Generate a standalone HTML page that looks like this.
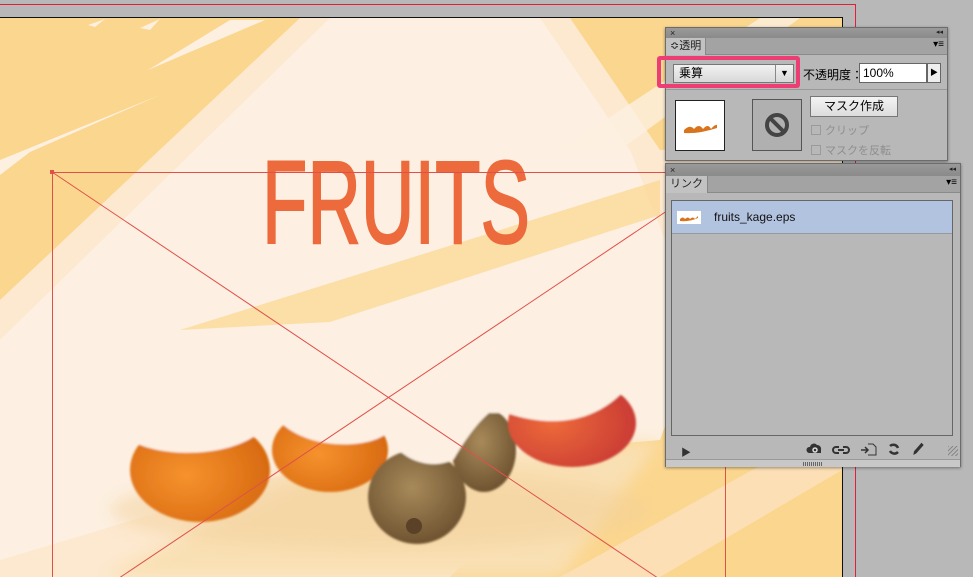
<!DOCTYPE html>
<html><head><meta charset="utf-8"><style>
*{margin:0;padding:0;box-sizing:border-box}
body{width:973px;height:577px;overflow:hidden;background:#b8b8b8;font-family:"Liberation Sans","Noto Sans CJK JP",sans-serif;position:relative}
.abs{position:absolute}
.panel{position:absolute;background:#b8b8b8;border:1px solid #6c6c6c;box-shadow:0 1px 3px rgba(0,0,0,.4)}
.bar{background:linear-gradient(#9a9a9a,#8a8a8a);position:relative;font-size:9px;color:#222}
.tabrow{height:17px;background:#a3a3a3;position:relative;border-bottom:1px solid #8a8a8a}
.tab{position:absolute;left:0;top:0;height:17px;background:#c2c2c2;border-right:1px solid #888;font-size:11px;line-height:17px;padding:0 4px;color:#222}
.gray{color:#8e8e8e;font-size:11px}
.cb{display:inline-block;width:10px;height:10px;border:1px solid #9a9a9a;vertical-align:-1px;margin-right:4px}
</style></head><body>
<svg class="abs" style="left:0;top:0" width="973" height="577">
<defs>
<radialGradient id="or" cx="0.4" cy="0.55" r="0.6"><stop offset="0" stop-color="#f6922e"/><stop offset="1" stop-color="#d86a10"/></radialGradient>
<radialGradient id="kw" cx="0.45" cy="0.4" r="0.6"><stop offset="0" stop-color="#a88a5a"/><stop offset="1" stop-color="#6f5431"/></radialGradient>
<radialGradient id="ap" cx="0.35" cy="0.5" r="0.7"><stop offset="0" stop-color="#ec6a3a"/><stop offset="1" stop-color="#c83834"/></radialGradient>
<filter id="bl"><feGaussianBlur stdDeviation="8"/></filter>
<filter id="bl2"><feGaussianBlur stdDeviation="1"/></filter>
</defs>
<rect x="0" y="18" width="842" height="559" fill="#fbd68e"/>
<polygon points="300,18 570,18 660,150 842,140 842,330 600,420 450,577 0,577 0,300" fill="#fde9d0"/>
<polygon points="330,18 540,18 630,150 700,330 660,440 300,470 0,560 0,340" fill="#fdf0e2"/>
<polygon points="180,330 660,180 660,215 330,322" fill="#fbd68e" opacity="0.7"/>
<polygon points="490,577 842,360 842,577" fill="#fbd68e"/>
<polygon points="560,577 842,420 842,470 660,577" fill="#fcdfb5"/>
<polygon points="0,160 160,95 30,152 0,175" fill="#fdf0e0"/>
<polygon points="148,70 265,20 230,20" fill="#fdf0e0"/>
<polygon points="88,25 105,19 95,27" fill="#fdf0e0"/>
<polygon points="140,28 160,19 150,30" fill="#fdf0e0"/>
<polygon points="560,150 760,18 800,18 620,150" fill="#fdf0e0" opacity="0.8"/>
<polygon points="100,577 300,480 660,440 560,577" fill="#f9e0b4" filter="url(#bl)"/>
<ellipse cx="380" cy="510" rx="270" ry="40" fill="#f3d09a" opacity="0.5" filter="url(#bl)"/>
<g filter="url(#bl2)">
<ellipse cx="200" cy="470" rx="70" ry="52" fill="url(#or)"/>
<ellipse cx="330" cy="450" rx="58" ry="42" fill="url(#or)"/>
<ellipse cx="484" cy="450" rx="32" ry="42" fill="url(#kw)"/>
<ellipse cx="417" cy="497" rx="49" ry="47" fill="url(#kw)"/>
<ellipse cx="572" cy="423" rx="64" ry="44" fill="url(#ap)"/>
<path d="M100,340 L700,340 L640,340 L632,381 C600,425 550,428 507,413 L489,413 C475,425 462,445 454,459 C440,468 405,468 386,434 C365,450 300,450 275,416 L268,424 C240,460 160,458 132,441 L100,340Z" fill="#fdf0e2"/>
</g>
<circle cx="414" cy="526" r="8" fill="#5a4128"/>
<text x="262" y="243" font-family="Liberation Sans Narrow, Liberation Sans" font-size="118" fill="#ec6a3c" textLength="268" lengthAdjust="spacingAndGlyphs" stroke="#ec6a3c" stroke-width="2">FRUITS</text>
<g stroke="#e0504a" stroke-width="1" fill="none">
<rect x="52.5" y="172.5" width="673" height="460"/>
<line x1="52" y1="172" x2="725" y2="623"/>
<line x1="725" y1="172" x2="52" y2="623"/>
</g>
<rect x="50" y="170" width="4" height="4" fill="#e0504a"/>
<rect x="0" y="0" width="973" height="18" fill="#b8b8b8"/>
<rect x="843" y="0" width="130" height="577" fill="#b8b8b8"/>
<line x1="0" y1="4.5" x2="855" y2="4.5" stroke="#e0203a"/>
<line x1="0" y1="17.5" x2="843" y2="17.5" stroke="#111"/>
<line x1="842.5" y1="17" x2="842.5" y2="577" stroke="#111"/>
<line x1="855.5" y1="4" x2="855.5" y2="577" stroke="#e0203a"/>
</svg>

<div class="panel" style="left:665px;top:27px;width:283px;height:134px">
 <div class="bar" style="height:10px;line-height:10px"><span style="position:absolute;left:4px">×</span><span style="position:absolute;right:4px;font-size:7px">◂◂</span></div>
 <div class="tabrow"><div class="tab">≎透明</div><span style="position:absolute;right:3px;top:1px;font-size:10px">▾≡</span></div>
 <div class="abs" style="left:7px;top:36px;width:121px;height:19px;background:linear-gradient(#f2f2f2,#d8d8d8);border:1px solid #777;font-size:12px;line-height:17px;padding-left:5px">乗算<span style="position:absolute;right:0;top:0;width:18px;height:17px;border-left:1px solid #888;text-align:center;font-size:9px">▼</span></div>
 <div class="abs" style="left:137px;top:38px;font-size:12px">不透明度：</div>
 <div class="abs" style="left:193px;top:35px;width:68px;height:20px;background:#fff;border:1px solid #666;font-size:12px;line-height:18px;padding-left:3px">100%</div>
 <div class="abs" style="left:261px;top:35px;width:14px;height:20px;background:#eee;border:1px solid #666;font-size:8px;line-height:18px;text-align:center">▶</div>
 <div class="abs" style="left:0;top:61px;width:281px;height:1px;background:#999"></div>
 <div class="abs" style="left:9px;top:72px;width:50px;height:51px;background:#fff;border:1px solid #222"><svg width="48" height="49"><path d="M8,29 q6,-6 10,-1 q5,-6 9,0 q5,-6 8,0 q4,-5 6,-4 l0,3 q-18,6 -33,5z" fill="#d8741e"/></svg></div>
 <div class="abs" style="left:86px;top:71px;width:50px;height:52px;background:#b0b0b0;border:1px solid #555"><svg width="48" height="50"><circle cx="24" cy="25" r="10" fill="none" stroke="#444" stroke-width="4"/><line x1="17" y1="18" x2="31" y2="32" stroke="#444" stroke-width="4"/></svg></div>
 <div class="abs" style="left:144px;top:68px;width:88px;height:21px;background:linear-gradient(#f4f4f4,#dcdcdc);border:1px solid #777;font-size:12px;line-height:19px;text-align:center">マスク作成</div>
 <div class="abs gray" style="left:145px;top:94px"><span class="cb"></span>クリップ</div>
 <div class="abs gray" style="left:145px;top:114px"><span class="cb"></span>マスクを反転</div>
</div>

<div class="panel" style="left:665px;top:163px;width:296px;height:304px">
 <div class="bar" style="height:12px;line-height:12px"><span style="position:absolute;left:4px">×</span><span style="position:absolute;right:4px;font-size:7px">◂◂</span></div>
 <div class="tabrow"><div class="tab">リンク</div><span style="position:absolute;right:3px;top:1px;font-size:10px">▾≡</span></div>
 <div class="abs" style="left:5px;top:36px;width:282px;height:236px;border:1px solid #666;background:#b8b8b8">
  <div style="height:33px;background:#b2c3df;border-bottom:1px solid #999;position:relative">
   <div style="position:absolute;left:5px;top:10px;width:24px;height:13px;background:#fff"><svg width="24" height="13"><path d="M3,8 q3,-3 5,0 q3,-3 5,0 q3,-3 5,0 q2,-2 3,-3 l0,2 q-9,4 -18,3z" fill="#d8741e"/></svg></div>
   <span style="position:absolute;left:42px;top:9px;font-size:12px;color:#111">fruits_kage.eps</span>
  </div>
 </div>
 <div class="abs" style="left:15px;top:280px;font-size:10px;color:#333">▶</div>
 <svg class="abs" style="left:140px;top:277px" width="125" height="16" fill="none" stroke="#333" stroke-width="2">
  <path d="M3,12 h12 v-3 a4,4 0 0 0 -4,-5 a4,4 0 0 0 -7,2 a3,3 0 0 0 -1,6z" fill="#333" stroke="none"/>
  <circle cx="9" cy="9" r="2" stroke="#ddd" stroke-width="1.5"/>
  <path d="M33,6 h-3 a3,3 0 0 0 0,6 h3 M37,6 h3 a3,3 0 0 1 0,6 h-3 M32,9 h6"/>
  <path d="M55,9 h7 M59,6 l3,3 -3,3" stroke-width="1.5"/><path d="M62,3 h5 l3,3 v8 h-8" stroke-width="1"/>
  <path d="M84,5 a5,5 0 0 1 8,2 M92,11 a5,5 0 0 1 -8,-1" stroke-width="2.5"/>
  <path d="M108,13 l2,-1 7,-8 -1.5,-1.5 -7,8z" fill="#333" stroke-width="1"/>
 </svg>
 <div class="abs" style="right:2px;top:282px;width:10px;height:10px;background:repeating-linear-gradient(135deg,#888 0 1px,transparent 1px 3px)"></div>
 <div class="abs" style="left:0;top:295px;width:294px;height:8px;background:#c8c8c8;border-top:1px solid #999"><div style="margin:2px auto;width:20px;height:4px;background:repeating-linear-gradient(90deg,#666 0 1px,transparent 1px 2px)"></div></div>
</div>

<div class="abs" style="left:657px;top:56px;width:143px;height:32px;border:4px solid #ec3d74;border-radius:3px"></div>
</body></html>
